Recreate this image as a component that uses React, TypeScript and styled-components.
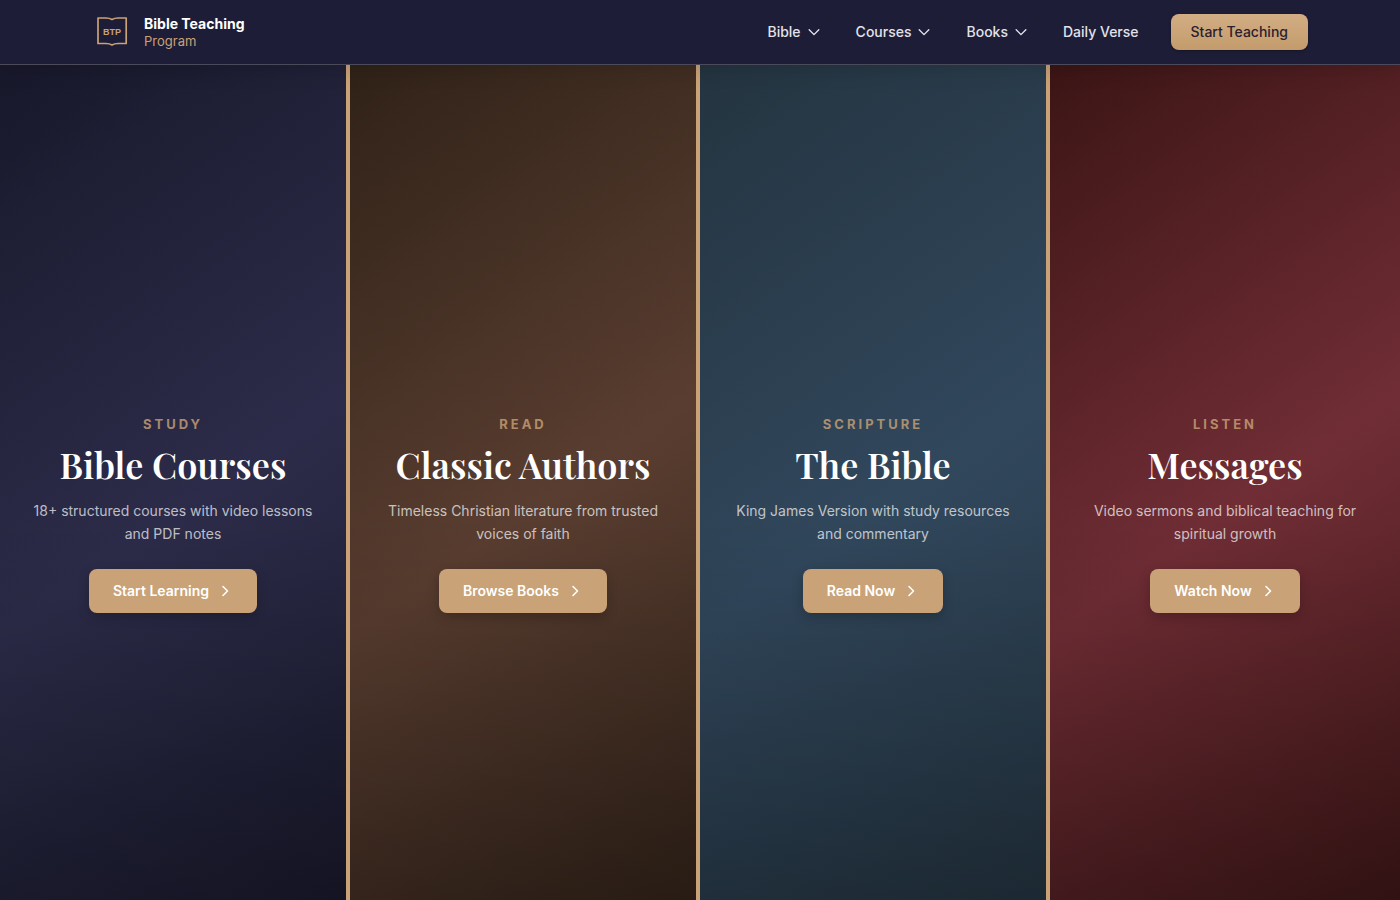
import React from "react";
import styled, { createGlobalStyle } from "styled-components";

const GlobalStyle = createGlobalStyle`
  *, *::before, *::after { box-sizing: border-box; }
  body {
    margin: 0;
    background: #1a1a2e;
    font-family: Inter, "Liberation Sans", sans-serif;
    color: #fff;
  }
`;

const Header = styled.header`
  position: sticky;
  top: 0;
  z-index: 2;
  background: #1d1d37;
  border-bottom: 1px solid #4a4a5a;
  box-shadow: 0 4px 20px rgba(0, 0, 0, 0.15);
`;

const HeaderInner = styled.div`
  display: flex;
  align-items: center;
  justify-content: space-between;
  max-width: 1280px;
  height: 64px;
  margin: 0 auto;
  padding: 0 32px;
`;

const Brand = styled.a`
  display: flex;
  align-items: center;
  gap: 12px;
  color: #fff;
  text-decoration: none;
`;

const LogoMark = styled.svg`
  display: block;
  width: 40px;
  height: 40px;
`;

const BrandText = styled.span`
  display: flex;
  flex-direction: column;
`;

const BrandName = styled.span`
  font-size: 14px;
  line-height: 18px;
  font-weight: 700;
`;

const BrandSub = styled.span`
  font-size: 13px;
  line-height: 16px;
  color: #c9a277;
`;

const Nav = styled.nav`
  display: flex;
  align-items: center;
  gap: 3px;
`;

const navItem = `
  display: flex;
  align-items: center;
  gap: 6px;
  padding: 8px 16px;
  border: 0;
  background: none;
  color: #e2e2ea;
  font: 500 14px/20px Inter, "Liberation Sans", sans-serif;
  text-decoration: none;
  cursor: pointer;
`;

const NavButton = styled.button`${navItem}`;
const NavLink = styled.a`${navItem}`;

const StartButton = styled.a`
  margin-left: 13px;
  padding: 8px 20px;
  border-radius: 8px;
  background: linear-gradient(180deg, #d3ae84, #c39b6c);
  box-shadow: 0 1px 3px rgba(0, 0, 0, 0.3);
  color: #2a2030;
  font-size: 14px;
  line-height: 20px;
  font-weight: 500;
  text-decoration: none;
`;

const Panels = styled.main`
  display: grid;
  grid-template-columns: repeat(4, 1fr);
  min-height: 100vh;
`;

const Panel = styled.section<{ $edge: string; $mid: string }>`
  display: flex;
  flex-direction: column;
  align-items: center;
  justify-content: center;
  padding: 32px;
  text-align: center;
  background:
    linear-gradient(180deg, transparent 50%, rgba(0, 0, 0, 0.3) 100%),
    linear-gradient(145deg, ${(p) => p.$edge} 0%, ${(p) => p.$mid} 50%, ${(p) => p.$edge} 100%);

  &:not(:last-child) {
    border-right: 4px solid #c9a277;
  }
`;

const Kicker = styled.p`
  margin: 0 0 8px;
  font-size: 13px;
  line-height: 20px;
  font-weight: 700;
  letter-spacing: 3px;
  text-transform: uppercase;
  color: #c9a277;
  opacity: 0.8;
`;

const Title = styled.h2`
  margin: 0 0 12px;
  font-family: "Playfair Display", "Liberation Serif", serif;
  font-size: 36px;
  line-height: 45px;
  font-weight: 600;
`;

const Blurb = styled.p`
  max-width: 280px;
  margin: 0 0 24px;
  font-size: 14px;
  line-height: 23px;
  color: rgba(255, 255, 255, 0.7);
`;

const Action = styled.a`
  display: flex;
  align-items: center;
  gap: 8px;
  margin-bottom: 4px;
  padding: 12px 24px;
  border-radius: 8px;
  background: #c9a277;
  box-shadow: 0 4px 12px rgba(0, 0, 0, 0.2);
  color: #fff;
  font-size: 14px;
  line-height: 20px;
  font-weight: 600;
  text-decoration: none;
`;

const Chevron = ({ size, d }: { size: number; d: string }) => (
  <svg width={size} height={size} viewBox="0 0 16 16" fill="none" stroke="currentColor"
    strokeWidth="1.6" strokeLinecap="round" strokeLinejoin="round" aria-hidden="true">
    <path d={d} />
  </svg>
);

const panels = [
  { kicker: "Study", title: "Bible Courses", blurb: "18+ structured courses with video lessons and PDF notes", action: "Start Learning", edge: "#18182b", mid: "#2c2c4a" },
  { kicker: "Read", title: "Classic Authors", blurb: "Timeless Christian literature from trusted voices of faith", action: "Browse Books", edge: "#302218", mid: "#593d30" },
  { kicker: "Scripture", title: "The Bible", blurb: "King James Version with study resources and commentary", action: "Read Now", edge: "#243440", mid: "#31475c" },
  { kicker: "Listen", title: "Messages", blurb: "Video sermons and biblical teaching for spiritual growth", action: "Watch Now", edge: "#3c1515", mid: "#702d35" },
];

export default function App() {
  return (
    <>
      <GlobalStyle />
      <Header>
        <HeaderInner>
          <Brand href="#">
            <LogoMark viewBox="0 0 40 40" aria-hidden="true">
              <path d="M6 6 H14 Q17.5 6 20 7.5 Q22.5 6 26 6 H34.2 V31.5 H26 Q22.5 31.5 20 33 Q17.5 31.5 14 31.5 H6 Z"
                fill="none" stroke="#c9a277" strokeWidth="1.7" strokeLinejoin="round" />
              <text x="20" y="22.5" textAnchor="middle" fontFamily="Liberation Sans, sans-serif" fontSize="9" fontWeight="700" fill="#c9a277">BTP</text>
            </LogoMark>
            <BrandText>
              <BrandName>Bible Teaching</BrandName>
              <BrandSub>Program</BrandSub>
            </BrandText>
          </Brand>
          <Nav aria-label="Main">
            {["Bible", "Courses", "Books"].map((label) => (
              <NavButton key={label} type="button">
                {label}
                <Chevron size={14} d="M2.5 5.5 8 11l5.5-5.5" />
              </NavButton>
            ))}
            <NavLink href="#verse">Daily Verse</NavLink>
            <StartButton href="#teach">Start Teaching</StartButton>
          </Nav>
        </HeaderInner>
      </Header>
      <Panels>
        {panels.map((p) => (
          <Panel key={p.title} $edge={p.edge} $mid={p.mid}>
            <Kicker>{p.kicker}</Kicker>
            <Title>{p.title}</Title>
            <Blurb>{p.blurb}</Blurb>
            <Action href="#">
              {p.action}
              <Chevron size={16} d="M6 3.5 10.5 8 6 12.5" />
            </Action>
          </Panel>
        ))}
      </Panels>
    </>
  );
}
